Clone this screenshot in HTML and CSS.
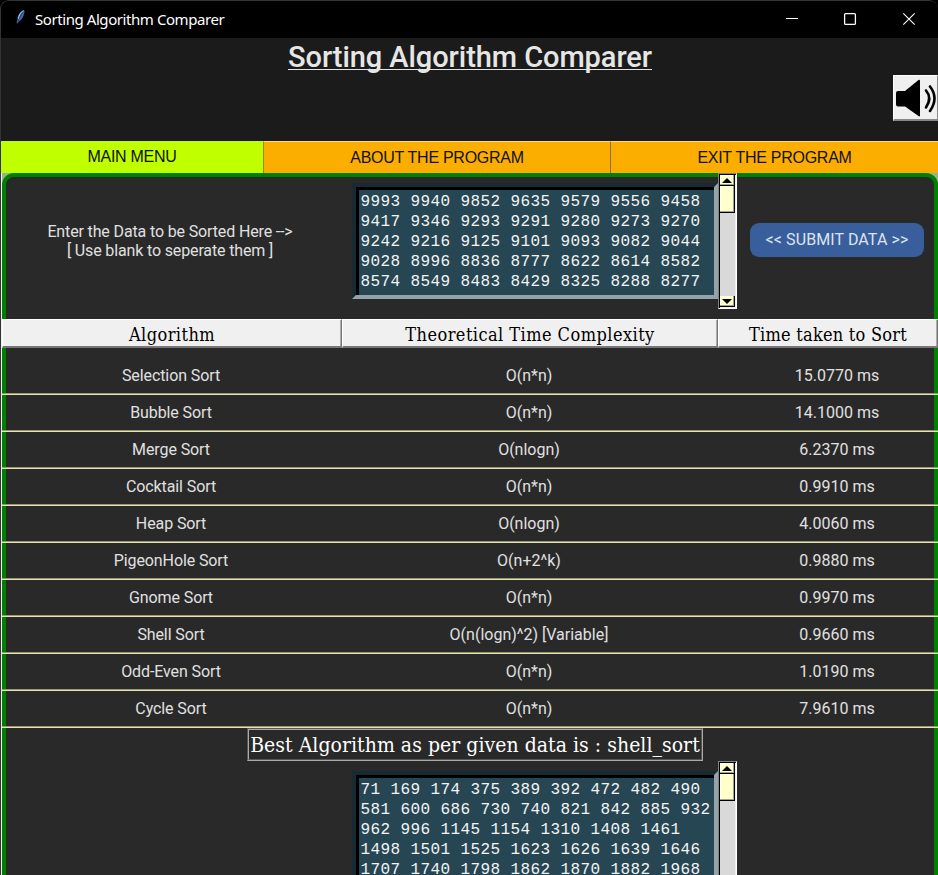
FILE: index.html
```
<!DOCTYPE html>
<html lang="en">
<head>
<meta charset="utf-8">
<title>Sorting Algorithm Comparer</title>
<link rel="stylesheet" href="styles.css">
</head>
<body>
<div class="window">
  <div class="titlebar">
    <svg class="feather" width="12" height="16" viewBox="0 0 12 16"><path d="M10.5 1.500C7 2 3.500 6 3.500 10L2.500 14 3.500 14.500 5 12.500C8 11 10.500 6 10.500 1.500Z" fill="#3d6da8"/><path d="M9.500 1.500C6.500 3 5 6 4.500 10" stroke="#b4d1ee" fill="none"/><path d="M9 3.500Q6 7 3.500 13.500" stroke="#142e52" fill="none" stroke-width=".7"/></svg>
    <span class="caption">Sorting Algorithm Comparer</span>
    <svg class="controls" width="131" height="14" viewBox="0 0 131 14" fill="none" stroke="#fff"><path d="M0 6.5H12"/><rect x="58.6" y="1.6" width="10.8" height="10.8" rx="1" stroke-width="1.3"/><path d="M117.3 1.3L128.7 12.7M128.7 1.3L117.3 12.7" stroke-width="1.1"/></svg>
  </div>
  <header class="header">
    <h1>Sorting Algorithm Comparer</h1>
    <button class="sound" aria-label="Sound"><svg width="41" height="42" viewBox="0 0 41 42"><path d="M3 14H10L23.500 3Q25 2 25 4V38.500Q25 40 23.500 39L10 29.500H3Q1 29.500 1 27.500V16Q1 14 3 14Z"/><g fill="none" stroke="#000" stroke-width="2.600" stroke-linecap="round"><path d="M31 13.500Q37.500 21 31 30.500"/><path d="M35 9.500Q44 21 35 34"/></g></svg></button>
  </header>
  <nav class="tabs">
    <button class="tab active">MAIN MENU</button>
    <button class="tab">ABOUT THE PROGRAM</button>
    <button class="tab last">EXIT THE PROGRAM</button>
  </nav>
  <main class="content">
    <div class="frame"></div>
    <section class="input-row">
      <p class="prompt">Enter the Data to be Sorted Here --&gt;<br>[ Use blank to seperate them ]</p>
      <div class="data">
        <pre class="textbox">9993 9940 9852 9635 9579 9556 9458
9417 9346 9293 9291 9280 9273 9270
9242 9216 9125 9101 9093 9082 9044
9028 8996 8836 8777 8622 8614 8582
8574 8549 8483 8429 8325 8288 8277</pre>
        <div class="scrollbar"><i class="arrow up"></i><i class="thumb"></i><i class="arrow down"></i></div>
      </div>
      <div class="action"><button class="submit">&lt;&lt; SUBMIT DATA &gt;&gt;</button></div>
    </section>
    <div class="row heads"><span class="h-name">Algorithm</span><span class="h-theory">Theoretical Time Complexity</span><span class="h-time">Time taken to Sort</span></div>
    <div class="row first"><span>Selection Sort</span><span>O(n*n)</span><span>15.0770 ms</span></div>
    <div class="row"><span>Bubble Sort</span><span>O(n*n)</span><span>14.1000 ms</span></div>
    <div class="row"><span>Merge Sort</span><span>O(nlogn)</span><span>6.2370 ms</span></div>
    <div class="row"><span>Cocktail Sort</span><span>O(n*n)</span><span>0.9910 ms</span></div>
    <div class="row"><span>Heap Sort</span><span>O(nlogn)</span><span>4.0060 ms</span></div>
    <div class="row"><span>PigeonHole Sort</span><span>O(n+2^k)</span><span>0.9880 ms</span></div>
    <div class="row"><span>Gnome Sort</span><span>O(n*n)</span><span>0.9970 ms</span></div>
    <div class="row"><span>Shell Sort</span><span>O(n(logn)^2) [Variable]</span><span>0.9660 ms</span></div>
    <div class="row"><span>Odd-Even Sort</span><span>O(n*n)</span><span>1.0190 ms</span></div>
    <div class="row"><span>Cycle Sort</span><span>O(n*n)</span><span>7.9610 ms</span></div>
    <p class="best"><span>Best Algorithm as per given data is : shell_sort</span></p>
    <div class="data output">
      <pre class="textbox">71 169 174 375 389 392 472 482 490
581 600 686 730 740 821 842 885 932
962 996 1145 1154 1310 1408 1461
1498 1501 1525 1623 1626 1639 1646
1707 1740 1798 1862 1870 1882 1968</pre>
      <div class="scrollbar"><i class="arrow up"></i><i class="thumb"></i><i class="arrow down"></i></div>
    </div>
  </main>
</div>
</body>
</html>
```
FILE: styles.css
```
* { box-sizing: border-box; }
body { margin: 0; background: #000; overflow: hidden; }
button { font: inherit; margin: 0; padding: 0; border: 0; }
.window { width: 938px; height: 875px; overflow: hidden; background: #1b1b1b; border: solid #333; border-width: 1px 0 0 1px; border-radius: 9px 9px 0 0; font: 16px/19px Roboto, sans-serif; color: #e0e0e0; }
.titlebar { height: 37px; background: #000; display: flex; align-items: center; padding: 0 21px 0 13px; }
.feather { margin-top: -6px; }
.caption { font: 15px/20px "Noto Sans", sans-serif; color: #fff; margin: -2px 0 0 9px; flex: 1; letter-spacing: -.43px; }
.controls { margin-top: -2px; }
.header { height: 103px; display: flex; flex-direction: column; align-items: center; }
h1 { margin: 2px 0 0 1px; font: 500 29px/34px Roboto, sans-serif; letter-spacing: -.06px; color: #e6e6e6; text-decoration: underline; text-decoration-thickness: 1px; text-underline-offset: 2px; text-decoration-skip-ink: none; }
.sound { width: 45px; height: 46px; align-self: flex-end; margin-top: 1px; background: #f0f0f0; border: solid; border-width: 1px 1px 2px; border-color: #fff #888 #888 #fff; }
.sound svg { display: block; margin: 0 0 0 1px; }
.tabs { display: grid; grid-template-columns: 262px 347px 328px; height: 32px; }
.tab { font: 16px/30px "Liberation Sans", sans-serif; letter-spacing: -.27px; padding-top: 1px; color: #111; background: #fbae00; border: solid; border-width: 1px 0 1px 1px; border-color: #ffdb80 #a37a18 #e3f0b0 #8b8d32; }
.tab.active { padding: 0 0 2px; background: #bfff00; border: 0; }
.tab.last { border-left-color: #8b7042; }
.content { position: relative; height: 702px; margin-left: 1px; background: #292929; }
.frame { position: absolute; inset: 0 0 -40px; background: linear-gradient(#8fb58f 0 0) 0 0/12px 12px no-repeat, linear-gradient(#8fb58f 0 0) 100% 0/12px 12px no-repeat; box-shadow: -1px 0 #eee; }
.frame::before { content: ""; position: absolute; inset: 0; background: #292929; border: 4px solid #008000; border-radius: 12px; }
.input-row { position: relative; display: grid; grid-template-columns: 350px 385px 201px; height: 146px; }
.prompt { margin: 49px 0 0; padding-right: 14px; text-align: center; letter-spacing: -.14px; }
.data { position: relative; display: flex; align-items: flex-start; }
.textbox { width: 366px; height: 116px; margin: 10px 0 0; padding: 5px 0 0 4.500px; background: linear-gradient(#000 0 0) 0 0/100% 3px no-repeat, linear-gradient(#000 0 0) 0 0/3px 100% no-repeat, #264653; background-origin: padding-box; border: 4px solid; border-color: #182a32 #93a3a9 #93a3a9 #182a32; font: 16px/20px "Liberation Mono", monospace; letter-spacing: .4px; color: #f4f4f4; }
.scrollbar { width: 19px; height: 136px; display: flex; flex-direction: column; background: #d9d9d9; border: solid; border-width: 1px; border-color: #828282 #fff #fff #828282; box-shadow: inset 1px 1px #000, inset -1px -1px #eee; padding: 1px; }
.arrow, .thumb { display: block; width: 15px; background: #ffc; border: solid #000; border-width: 0 1px 1px 0; box-shadow: inset -1px -1px #a3a383, inset 1px 1px #ffe; }
.arrow { height: 11px; }
.arrow::before { content: ""; display: block; width: 0; height: 0; margin: 3px auto 0; border: solid transparent; border-width: 0 5px 5px; border-bottom-color: #000; }
.thumb { height: 27px; }
.down { margin-top: auto; }
.down::before { border-width: 5px 5px 0; border-top-color: #000; }
.action { padding: 50px 0 0 13px; }
.submit { width: 174px; height: 34px; padding-bottom: 2px; border-radius: 9px; background: #395e9c; color: #dce4ee; letter-spacing: .1px; }
.row { position: relative; display: grid; grid-template-columns: 340px 376px 220px; height: 37px; padding-top: 8px; border-bottom: 1px solid #e6e6aa; box-shadow: inset 0 -1px #969678; text-align: center; }
.row.first { height: 47px; padding-top: 18px; }
.row span:first-child { padding-right: 2px; letter-spacing: -.1px; }
.row span:nth-child(2) { padding-right: 2px; }
.row span:nth-child(3) { padding-left: 18px; }
.row.heads { height: 29px; padding: 0; border: 0; box-shadow: none; font: condensed 18px/29px "DejaVu Serif", "DejaVu Serif Condensed", serif; color: #000; }
.row.heads span { height: 29px; padding: 0; background: #f0f0f0; border: solid; border-width: 1px 1px 2px; border-color: #fff #777 #777 #fff; box-shadow: inset -1px 0 #aaa; }
.row.heads .h-name { letter-spacing: .45px; }
.row.heads .h-theory { letter-spacing: .45px; }
.row.heads .h-time { letter-spacing: .25px; }
.best { position: relative; margin: 0; height: 33px; padding-left: 245px; }
.best span { display: flex; justify-content: center; width: 456px; height: 33px; border: 2px groove #aaa; font: condensed 21px/31px "DejaVu Serif", "DejaVu Serif Condensed", serif; letter-spacing: .03px; color: #fff; white-space: nowrap; }
.output { margin-left: 350px; }
```
